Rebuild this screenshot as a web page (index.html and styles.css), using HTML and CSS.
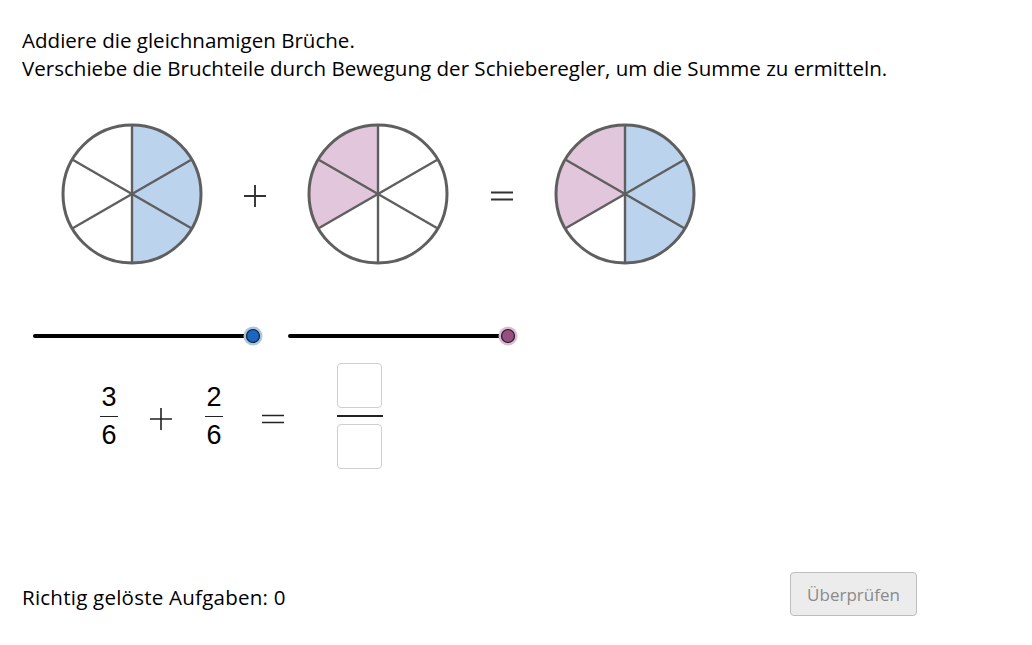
FILE: index.html
```html
<!DOCTYPE html>
<html lang="de">
<head>
<meta charset="utf-8">
<title>Gleichnamige Brüche addieren</title>
<link rel="stylesheet" href="styles.css">
</head>
<body>
<main class="applet">
  <div class="intro">
    <p>Addiere die gleichnamigen Brüche.</p>
    <p>Verschiebe die Bruchteile durch Bewegung der Schieberegler, um die Summe zu ermitteln.</p>
  </div>

  <div class="figures">
    <svg class="pie" viewBox="0 0 142 142" width="142" height="142">
      <path class="blue" d="M71,71 L71,2 A69,69 0 0 1 71,140 Z"/>
      <g class="spokes">
        <line x1="71" y1="71" x2="71" y2="2"/>
        <line x1="71" y1="71" x2="130.76" y2="36.5"/>
        <line x1="71" y1="71" x2="130.76" y2="105.5"/>
        <line x1="71" y1="71" x2="71" y2="140"/>
        <line x1="71" y1="71" x2="11.24" y2="105.5"/>
        <line x1="71" y1="71" x2="11.24" y2="36.5"/>
      </g>
      <circle class="rim" cx="71" cy="71" r="69"/>
    </svg>
    <div class="op op-plus">
      <svg viewBox="0 0 24 24" width="24" height="24"><path d="M1,12 H23 M12,1 V23"/></svg>
    </div>
    <svg class="pie" viewBox="0 0 142 142" width="142" height="142">
      <path class="pink" d="M71,71 L71,2 A69,69 0 0 0 11.24,105.5 Z"/>
      <g class="spokes">
        <line x1="71" y1="71" x2="71" y2="2"/>
        <line x1="71" y1="71" x2="130.76" y2="36.5"/>
        <line x1="71" y1="71" x2="130.76" y2="105.5"/>
        <line x1="71" y1="71" x2="71" y2="140"/>
        <line x1="71" y1="71" x2="11.24" y2="105.5"/>
        <line x1="71" y1="71" x2="11.24" y2="36.5"/>
      </g>
      <circle class="rim" cx="71" cy="71" r="69"/>
    </svg>
    <div class="op op-eq">
      <svg viewBox="0 0 24 24" width="24" height="24"><path d="M1,8.5 H23 M1,15.5 H23"/></svg>
    </div>
    <svg class="pie" viewBox="0 0 142 142" width="142" height="142">
      <path class="blue" d="M71,71 L71,2 A69,69 0 0 1 71,140 Z"/>
      <path class="pink" d="M71,71 L71,2 A69,69 0 0 0 11.24,105.5 Z"/>
      <g class="spokes">
        <line x1="71" y1="71" x2="71" y2="2"/>
        <line x1="71" y1="71" x2="130.76" y2="36.5"/>
        <line x1="71" y1="71" x2="130.76" y2="105.5"/>
        <line x1="71" y1="71" x2="71" y2="140"/>
        <line x1="71" y1="71" x2="11.24" y2="105.5"/>
        <line x1="71" y1="71" x2="11.24" y2="36.5"/>
      </g>
      <circle class="rim" cx="71" cy="71" r="69"/>
    </svg>
  </div>

  <div class="sliders">
    <svg class="slider" viewBox="0 0 240 26" width="240" height="26">
      <line class="track" x1="12" y1="13" x2="230" y2="13"/>
      <circle class="halo halo-blue" cx="230" cy="13" r="9.5"/>
      <circle class="knob knob-blue" cx="230" cy="13" r="6.5"/>
    </svg>
    <svg class="slider" viewBox="0 0 240 26" width="240" height="26">
      <line class="track" x1="12" y1="13" x2="230" y2="13"/>
      <circle class="halo halo-pink" cx="230" cy="13" r="9.5"/>
      <circle class="knob knob-pink" cx="230" cy="13" r="6.5"/>
    </svg>
  </div>

  <div class="equation">
    <div class="frac"><span>3</span><i class="bar"></i><span>6</span></div>
    <div class="sign" aria-label="plus">
      <svg viewBox="0 0 22 22" width="22" height="22"><path d="M0,11 H22 M11,0 V22"/></svg>
    </div>
    <div class="frac"><span>2</span><i class="bar"></i><span>6</span></div>
    <div class="sign" aria-label="gleich">
      <svg viewBox="0 0 22 22" width="22" height="22"><path d="M0,7.5 H22 M0,14.5 H22"/></svg>
    </div>
    <div class="answer">
      <input class="box" type="text" aria-label="Zähler">
      <i class="answer-bar"></i>
      <input class="box" type="text" aria-label="Nenner">
    </div>
  </div>

  <div class="footer">
    <p class="score">Richtig gelöste Aufgaben: 0</p>
    <button class="check" type="button" disabled>Überprüfen</button>
  </div>
</main>
</body>
</html>
```

FILE: styles.css
```css
* { box-sizing: border-box; }

html, body {
  margin: 0;
  padding: 0;
  background: #ffffff;
}

body {
  font-family: "Open Sans", "Liberation Sans", Arial, sans-serif;
  color: #000;
}

.applet {
  width: 1032px;
  height: 645px;
  position: relative;
  overflow: hidden;
}

.intro {
  padding: 26px 0 0 22px;
  font-size: 20.55px;
  line-height: 28px;
}

.intro p { margin: 0; }

.figures {
  display: flex;
  align-items: center;
  margin-top: 41px;
  padding-left: 61px;
  height: 142px;
}

.pie { display: block; flex: none; }

.pie .blue { fill: #bcd3ee; }
.pie .pink { fill: #e2c6dc; }

.pie .spokes line {
  stroke: #5f5f5f;
  stroke-width: 2.4;
}

.pie .rim {
  fill: none;
  stroke: #5f5f5f;
  stroke-width: 3;
}

.op {
  display: flex;
  justify-content: center;
  align-items: center;
  height: 142px;
  padding-top: 4px;
}

.op-plus { width: 104px; }
.op-eq { width: 105px; }

.op svg path {
  stroke: #333;
  stroke-width: 1.9;
  fill: none;
}

.sliders {
  display: flex;
  gap: 15px;
  margin-top: 58px;
  padding-left: 23px;
}

.slider { display: block; }

.slider .track {
  stroke: #000;
  stroke-width: 4;
  stroke-linecap: round;
}

.halo-blue { fill: #a9c6e6; }
.halo-pink { fill: #dcbcd3; }

.knob {
  stroke: #1e1e1e;
  stroke-width: 1.2;
}

.knob-blue { fill: #1a66c4; }
.knob-pink { fill: #974f82; }

.equation {
  display: grid;
  grid-template-columns: 58px 46px 60px 58px 45px;
  align-items: center;
  margin-top: 14px;
  padding-left: 80px;
  font-family: "Liberation Sans", Arial, sans-serif;
  font-size: 27px;
}

.equation > .answer { margin-left: 35px; }

.frac {
  display: flex;
  flex-direction: column;
  align-items: center;
  line-height: 26px;
}

.frac .bar {
  display: block;
  width: 18px;
  height: 1.5px;
  background: #222;
  margin: 6px 0 5px;
}

.sign {
  display: flex;
  justify-content: center;
  align-items: center;
  padding-top: 6px;
}

.sign svg path {
  stroke: #222;
  stroke-width: 1.6;
  fill: none;
}

.answer {
  display: flex;
  flex-direction: column;
  align-items: center;
  width: 45px;
}

.box {
  width: 45px;
  height: 45px;
  border: 1px solid #cfcfcf;
  border-radius: 4px;
  background: #fff;
  padding: 0;
  margin: 0;
  font: inherit;
  text-align: center;
}

.answer-bar {
  display: block;
  width: 46px;
  height: 1.5px;
  background: #222;
  margin: 7px 0 7px;
}

.footer {
  position: absolute;
  left: 0;
  right: 0;
  top: 572px;
  display: flex;
  justify-content: space-between;
  align-items: flex-start;
  padding: 0 115px 0 22px;
}

.score {
  margin: 11px 0 0;
  font-size: 20.55px;
  line-height: 28px;
  letter-spacing: 0.22px;
}

.check {
  width: 127px;
  height: 44px;
  border: 1px solid #bdbdbd;
  border-radius: 4px;
  background: #ececec;
  color: #8a8a8a;
  font-family: "Open Sans", "Liberation Sans", sans-serif;
  font-size: 17px;
  padding: 0;
}
```
